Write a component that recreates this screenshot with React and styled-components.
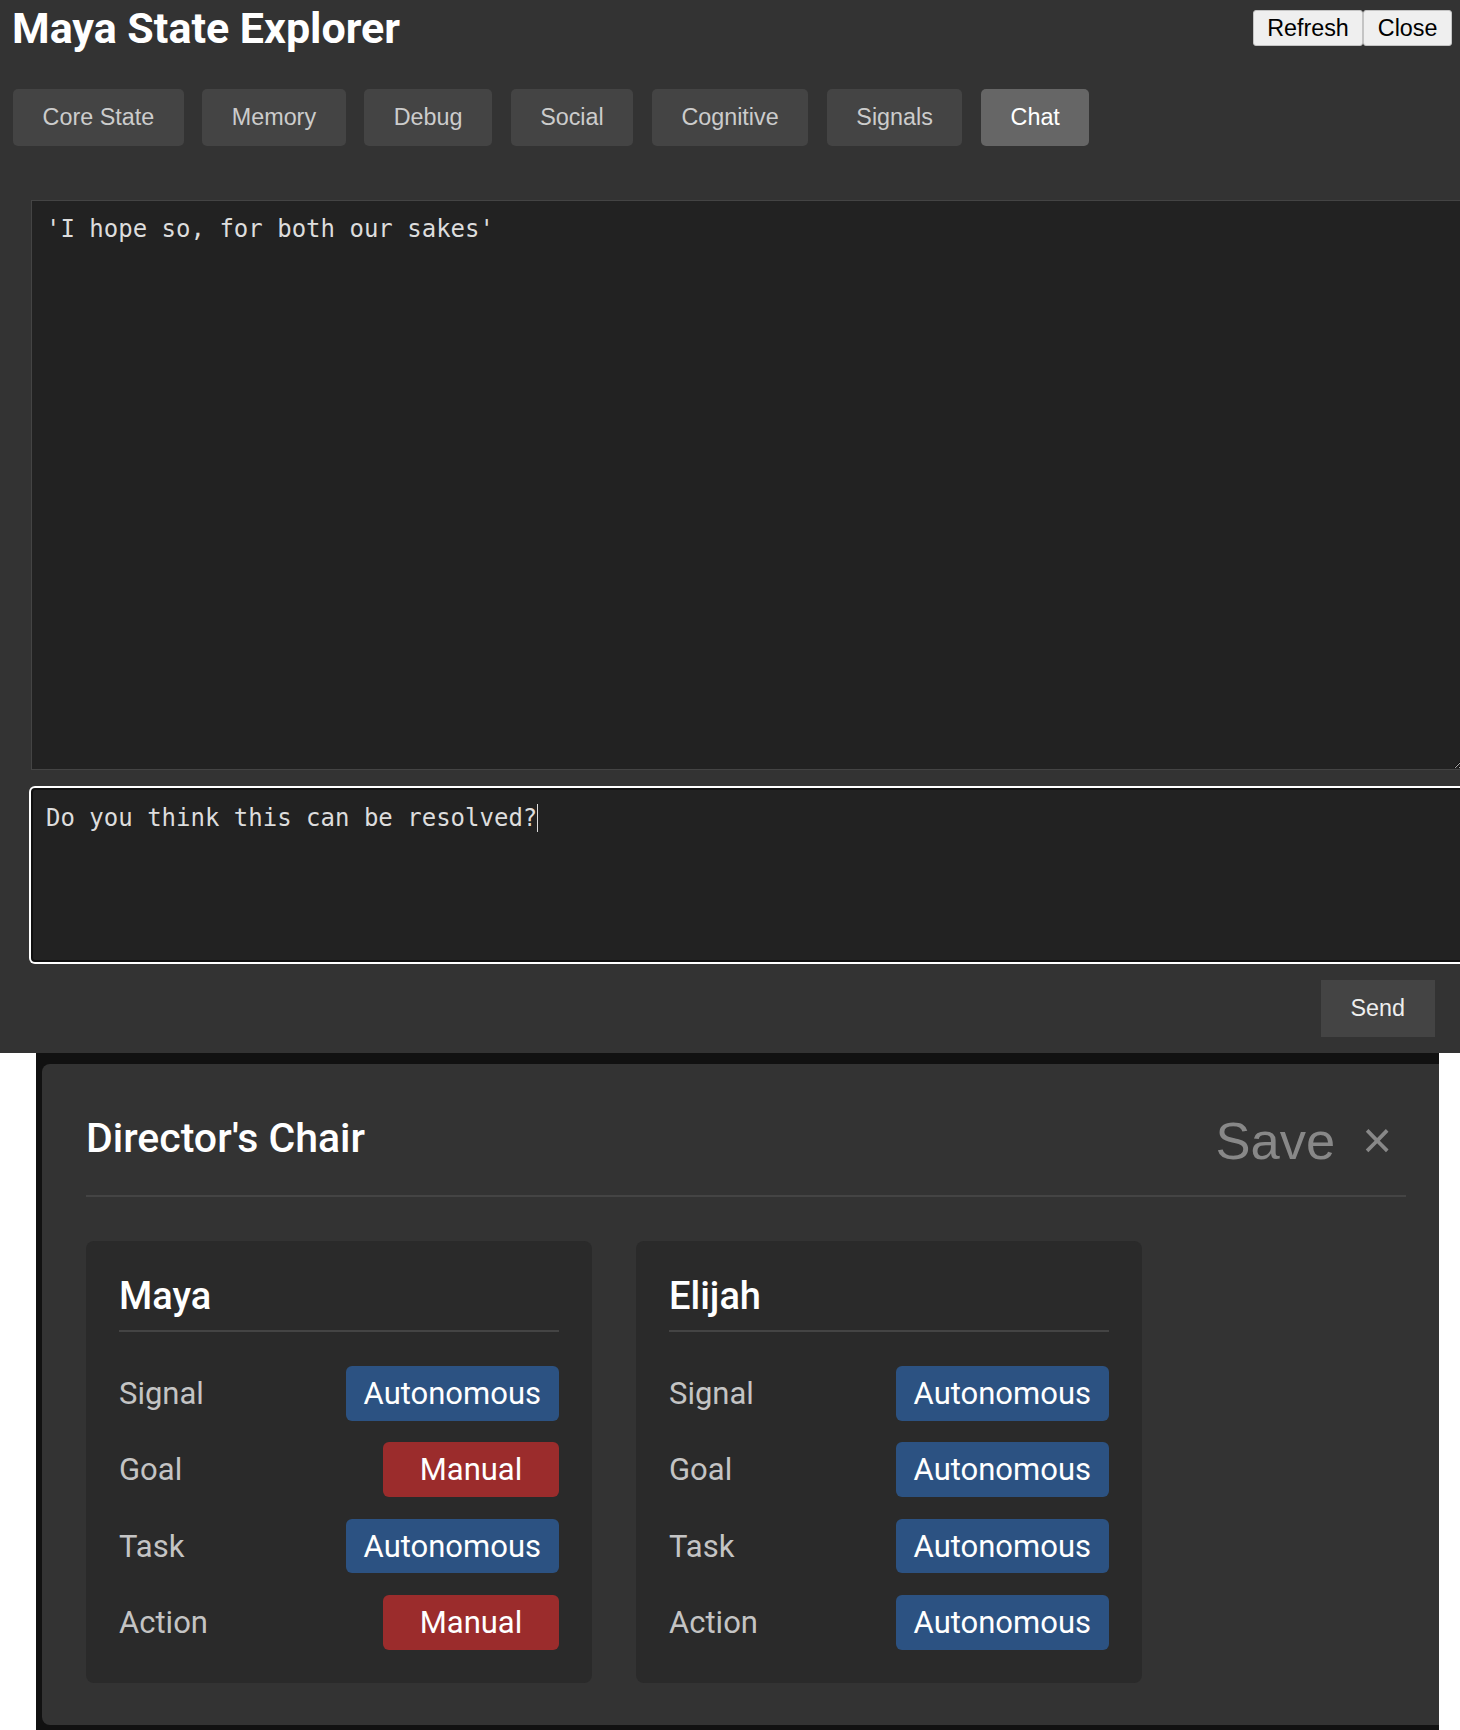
import React from "react";
import styled, { createGlobalStyle } from "styled-components";

const GlobalStyle = createGlobalStyle`
  html, body {
    margin: 0;
    padding: 0;
    background: #ffffff;
    overflow: hidden;
  }
  body {
    font-family: Roboto, "Liberation Sans", Arial, sans-serif;
  }
  * { box-sizing: border-box; }
`;

const TopPanel = styled.section`
  background: #333333;
  height: 1053px;
  overflow: hidden;
`;

const Header = styled.header`
  display: flex;
  align-items: center;
  justify-content: space-between;
  padding: 3px 8px 0 12px;
`;

const Title = styled.h1`
  margin: 0;
  font-family: Roboto, sans-serif;
  font-weight: 700;
  font-size: 43px;
  line-height: normal;
  color: #ffffff;
`;

const HeaderButtons = styled.div`
  display: flex;
`;

const SmallButton = styled.button`
  height: 36px;
  padding: 0 13.5px;
  font-family: "Liberation Sans", Arial, sans-serif;
  font-size: 23.33px;
  color: #000000;
  background: #efefef;
  border: 1px solid #c4c4c4;
  border-radius: 3px;
`;

const Tabs = styled.nav`
  display: flex;
  gap: 18.5px;
  margin-top: 36px;
  padding-left: 13px;
`;

const Tab = styled.button`
  padding: 15px 29.6px;
  font-family: "Liberation Sans", Arial, sans-serif;
  font-size: 23.33px;
  line-height: normal;
  border: none;
  border-radius: 5px;
  background: ${(p) => (p.$active ? "#666666" : "#444444")};
  color: ${(p) => (p.$active ? "#ffffff" : "#cccccc")};
`;

const ChatSection = styled.div`
  padding: 54px 25px 0 31px;
`;

const Output = styled.textarea`
  display: block;
  box-sizing: content-box;
  width: 100%;
  height: 542px;
  margin: 0;
  padding: 14px 12px 12px 14px;
  border: 1px solid #444444;
  background: #222222;
  color: #dddddd;
  font-family: "DejaVu Sans Mono", monospace;
  font-size: 24px;
  line-height: normal;
  outline: none;
`;

const InputWrap = styled.div`
  position: relative;
  margin-top: 18px;
`;

const Input = styled.textarea`
  display: block;
  box-sizing: content-box;
  width: 100%;
  height: 144px;
  margin: 0;
  padding: 14px 12px 12px 13px;
  border: 2px solid #101010;
  border-radius: 4px;
  box-shadow: 0 0 0 2px #ffffff;
  background: #222222;
  color: #dddddd;
  font-family: "DejaVu Sans Mono", monospace;
  font-size: 24px;
  line-height: normal;
  resize: none;
  outline: none;
`;

const Caret = styled.span`
  position: absolute;
  top: 16px;
  left: calc(15px + ${(p) => p.$chars}ch);
  width: 1px;
  height: 28px;
  background: #dddddd;
  font-family: "DejaVu Sans Mono", monospace;
  font-size: 24px;
  pointer-events: none;
`;

const SendRow = styled.div`
  display: flex;
  justify-content: flex-end;
  margin-top: 18px;
`;

const SendButton = styled.button`
  padding: 15px 30px;
  font-family: "Liberation Sans", Arial, sans-serif;
  font-size: 23.33px;
  line-height: normal;
  border: none;
  background: #444444;
  color: #eeeeee;
`;

const Backdrop = styled.div`
  margin-left: 36px;
  width: 1403px;
  height: 677px;
  padding: 11px 0 0 6px;
  background: #111111;
  overflow: hidden;
`;

const Modal = styled.div`
  height: 661px;
  padding: 48px 33px 0 44px;
  background: #333333;
  border-radius: 8px 0 0 8px;
`;

const ModalHeader = styled.div`
  display: flex;
  align-items: flex-start;
  padding-bottom: 24px;
  border-bottom: 2px solid #444444;
`;

const ModalTitle = styled.h2`
  flex: 1;
  margin: 2px 0 0;
  font-family: Roboto, sans-serif;
  font-weight: 500;
  font-size: 41px;
  line-height: normal;
  color: #ffffff;
`;

const ModalActions = styled.div`
  display: flex;
  gap: 27px;
  margin: -2px 14px 0 0;
`;

const GhostButton = styled.button`
  padding: 0;
  border: none;
  background: none;
  font-family: "Liberation Sans", Arial, sans-serif;
  font-size: ${(p) => (p.$small ? "51px" : "52.5px")};
  line-height: normal;
  color: #888888;
`;

const Cards = styled.div`
  display: grid;
  grid-template-columns: repeat(2, 506px);
  gap: 44px;
  margin-top: 44px;
`;

const Card = styled.div`
  padding: 33px;
  background: #2a2a2a;
  border-radius: 8px;
`;

const CardTitle = styled.h3`
  margin: 0;
  padding-bottom: 12px;
  border-bottom: 2px solid #444444;
  font-family: Roboto, sans-serif;
  font-weight: 500;
  font-size: 38px;
  line-height: normal;
  color: #ffffff;
`;

const Rows = styled.div`
  display: flex;
  flex-direction: column;
  gap: 21.8px;
  margin-top: 34px;
`;

const Row = styled.div`
  display: flex;
  align-items: center;
  justify-content: space-between;
`;

const Label = styled.span`
  font-family: Roboto, sans-serif;
  font-size: 31px;
  color: #c4c4c4;
`;

const Badge = styled.span`
  min-width: 176px;
  padding: 8.8px 18px;
  border-radius: 6px;
  text-align: center;
  font-family: Roboto, sans-serif;
  font-size: 31px;
  line-height: normal;
  color: #ffffff;
  background: ${(p) => (p.$mode === "manual" ? "#9b2c2c" : "#2c5282")};
`;

const tabs = ["Core State", "Memory", "Debug", "Social", "Cognitive", "Signals", "Chat"];

const characters = [
  {
    name: "Maya",
    controls: [
      ["Signal", "autonomous"],
      ["Goal", "manual"],
      ["Task", "autonomous"],
      ["Action", "manual"],
    ],
  },
  {
    name: "Elijah",
    controls: [
      ["Signal", "autonomous"],
      ["Goal", "autonomous"],
      ["Task", "autonomous"],
      ["Action", "autonomous"],
    ],
  },
];

export default function App() {
  const message = "Do you think this can be resolved?";

  return (
    <>
      <GlobalStyle />
      <TopPanel>
        <Header>
          <Title>Maya State Explorer</Title>
          <HeaderButtons>
            <SmallButton>Refresh</SmallButton>
            <SmallButton>Close</SmallButton>
          </HeaderButtons>
        </Header>
        <Tabs>
          {tabs.map((t) => (
            <Tab key={t} $active={t === "Chat"}>
              {t}
            </Tab>
          ))}
        </Tabs>
        <ChatSection>
          <Output readOnly value={"'I hope so, for both our sakes'"} />
          <InputWrap>
            <Input defaultValue={message} />
            <Caret $chars={message.length} />
          </InputWrap>
          <SendRow>
            <SendButton>Send</SendButton>
          </SendRow>
        </ChatSection>
      </TopPanel>
      <Backdrop>
        <Modal>
          <ModalHeader>
            <ModalTitle>Director's Chair</ModalTitle>
            <ModalActions>
              <GhostButton>Save</GhostButton>
              <GhostButton $small aria-label="Close">×</GhostButton>
            </ModalActions>
          </ModalHeader>
          <Cards>
            {characters.map((c) => (
              <Card key={c.name}>
                <CardTitle>{c.name}</CardTitle>
                <Rows>
                  {c.controls.map(([label, mode]) => (
                    <Row key={label}>
                      <Label>{label}</Label>
                      <Badge $mode={mode}>{mode === "manual" ? "Manual" : "Autonomous"}</Badge>
                    </Row>
                  ))}
                </Rows>
              </Card>
            ))}
          </Cards>
        </Modal>
      </Backdrop>
    </>
  );
}
